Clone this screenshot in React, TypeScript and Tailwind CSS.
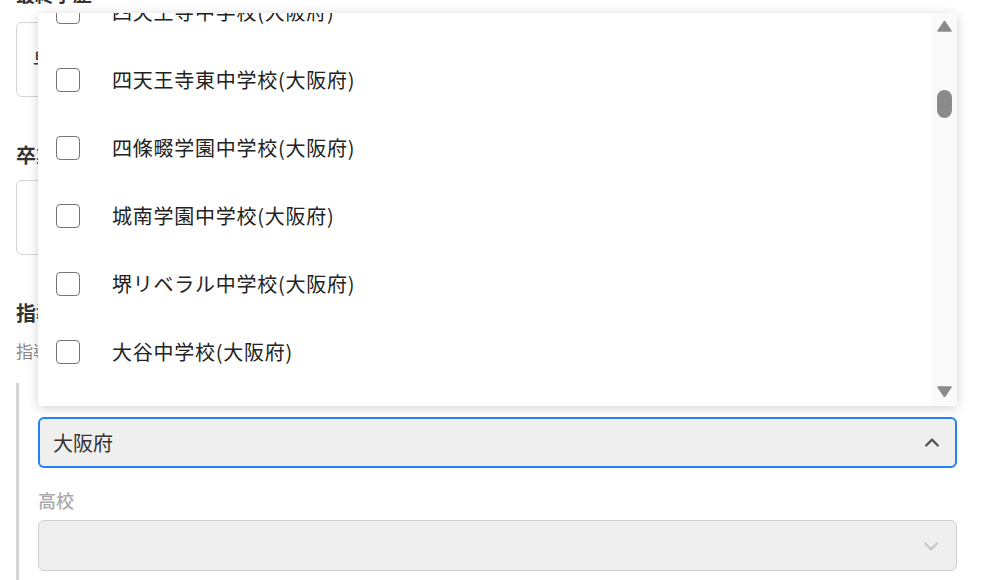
import React, { useEffect, useRef } from 'react'

const schools = [
  '上宮中学校',
  '上宮太子中学校',
  '大阪信愛学院中学校',
  '大阪女学院中学校',
  '大阪星光学院中学校',
  '大阪桐蔭中学校',
  '開明中学校',
  '関西大倉中学校',
  '関西創価中学校',
  '金蘭千里中学校',
  '賢明学院中学校',
  '香里ヌヴェール学院中学校',
  '四天王寺中学校',
  '四天王寺東中学校',
  '四條畷学園中学校',
  '城南学園中学校',
  '堺リベラル中学校',
  '大谷中学校',
  '清教学園中学校',
  '清風中学校',
  '清風南海中学校',
  '高槻中学校',
  '帝塚山学院中学校',
  '帝塚山学院泉ヶ丘中学校',
  '同志社香里中学校',
  '浪速中学校',
  '羽衣学園中学校',
  '初芝富田林中学校',
  '初芝立命館中学校',
  '東大谷中学校',
  '桃山学院中学校',
  '明星中学校',
  '履正社中学校',
  '早稲田摂陵中学校',
  '追手門学院中学校',
  '追手門学院大手前中学校',
  '大阪学芸中等教育学校',
  '大阪国際中学校',
  '大阪産業大学附属中学校',
  '大阪青凌中学校',
  '大阪体育大学浪商中学校',
  '大阪薫英女学院中学校',
  '大阪金剛インターナショナル中学校',
  '大商学園中学校',
  '関西大学中等部',
  '関西大学第一中学校',
  '関西大学北陽中学校',
  '近畿大学附属中学校',
  '建国中学校',
  '金光大阪中学校',
  '金光八尾中学校',
  '常翔学園中学校',
  '常翔啓光学園中学校',
  '信愛女学院中学校',
  '樟蔭中学校',
  '聖母被昇天学院中学校',
  '相愛中学校',
  '梅花中学校',
  'プール学院中学校',
  '箕面自由学園中学校',
  '東海大学付属大阪仰星中等部',
  '帝塚山泉ヶ丘中学校',
  '育英西中学校',
  '雲雀丘学園中学校',
  '清明学院中学校',
  '大阪電気通信大学中学校',
  '大阪緑涼中学校',
  '精華中学校',
  '阪南大学中学校',
  '英真学園中学校',
  '好文学園中学校',
]

function Chevron({ up, className }: { up?: boolean; className?: string }) {
  return (
    <svg width="20" height="20" viewBox="0 0 24 24" fill="none" className={className}>
      <path
        d={up ? 'M5 15l7-7 7 7' : 'M5 9l7 7 7-7'}
        stroke="currentColor"
        strokeWidth="2.8"
        strokeLinecap="round"
        strokeLinejoin="round"
      />
    </svg>
  )
}

function Arrow({ up }: { up?: boolean }) {
  return (
    <svg width="15" height="12" viewBox="0 0 15 12" className="shrink-0">
      <path
        d={up ? 'M7.5 1.5L14 11H1z' : 'M1 1h13l-6.5 9.5z'}
        fill="#8a8a8a"
        stroke="#8a8a8a"
        strokeWidth="1.5"
        strokeLinejoin="round"
      />
    </svg>
  )
}

function SchoolDropdown() {
  const listRef = useRef<HTMLDivElement>(null)

  useEffect(() => {
    if (listRef.current) listRef.current.scrollTop = 851
  }, [])

  return (
    <div className="absolute left-0 right-0 bottom-full mb-[11px] h-[393px] bg-white rounded-[4px] shadow-[0_2px_12px_rgba(0,0,0,0.18)] overflow-hidden z-10 flex">
      <div ref={listRef} className="flex-1 h-full overflow-y-scroll [scrollbar-width:none]">
        {schools.map((s) => (
          <label key={s} className="flex items-center h-[68px] pl-[18px] cursor-pointer">
            <span className="w-6 h-6 shrink-0 rounded-[4px] border-[1.5px] border-[#767676] bg-white" />
            <span className="ml-[32px] text-[20px] text-[#222] tracking-[0.75px]">{s}(大阪府)</span>
          </label>
        ))}
      </div>
      {/* scrollbar */}
      <div className="w-[25px] shrink-0 bg-[#fafafa] flex flex-col items-center pt-[7px] pb-[8px]">
        <Arrow up />
        <div className="mt-[58px] w-[15px] h-[28px] rounded-full bg-[#8a8a8a]" />
        <div className="flex-1" />
        <Arrow />
      </div>
    </div>
  )
}

export default function App() {
  return (
    <div
      className="h-[580px] overflow-hidden bg-white"
      style={{ fontFamily: '"Noto Sans CJK JP", "Noto Sans", sans-serif' }}
    >
      <div className="-mt-[20px] pl-4 pr-6">
        {/* 最終学歴 */}
        <p className="text-[19px] font-bold text-[#333] leading-[28px]">最終学歴</p>
        <div className="mt-[14px] h-[75px] border border-[#d5d5d5] rounded-[6px] flex items-center px-4 text-[20px] text-[#333]">
          早稲田大学
        </div>

        {/* 卒業年月 */}
        <p className="mt-[44px] text-[20px] font-bold text-[#333] leading-[28px]">卒業年月</p>
        <div className="mt-[11px] h-[75px] border border-[#d5d5d5] rounded-[6px]" />

        {/* 指導可能な学校 */}
        <p className="mt-[43px] text-[20px] font-bold text-[#333] leading-[30px]">指導可能な学校</p>
        <p className="mt-[11px] text-[17px] text-[#888] leading-[24px]">指導可能な学校を選択してください</p>

        <div className="mt-[20px] border-l-[3px] border-[#d4d4d4] pl-[19px] pb-6">
          <p className="text-[18px] text-[#aaa] leading-[26px]">都道府県</p>
          <div className="relative mt-[8px]">
            <SchoolDropdown />
            <div className="h-[51px] bg-[#efefef] border-2 border-[#2580f5] rounded-[6px] flex items-center justify-between pl-[13px] pr-[13px]">
              <span className="text-[20px] text-[#333]">大阪府</span>
              <Chevron up className="text-[#555]" />
            </div>
          </div>

          <p className="mt-[19px] text-[18px] font-medium text-[#aaa] leading-[26px]">高校</p>
          <div className="mt-[7px] h-[51px] bg-[#efefef] border border-[#d0d0d0] rounded-[6px] flex items-center justify-end pr-[15px]">
            <Chevron className="text-[#c8c8c8]" />
          </div>
        </div>
      </div>
    </div>
  )
}
